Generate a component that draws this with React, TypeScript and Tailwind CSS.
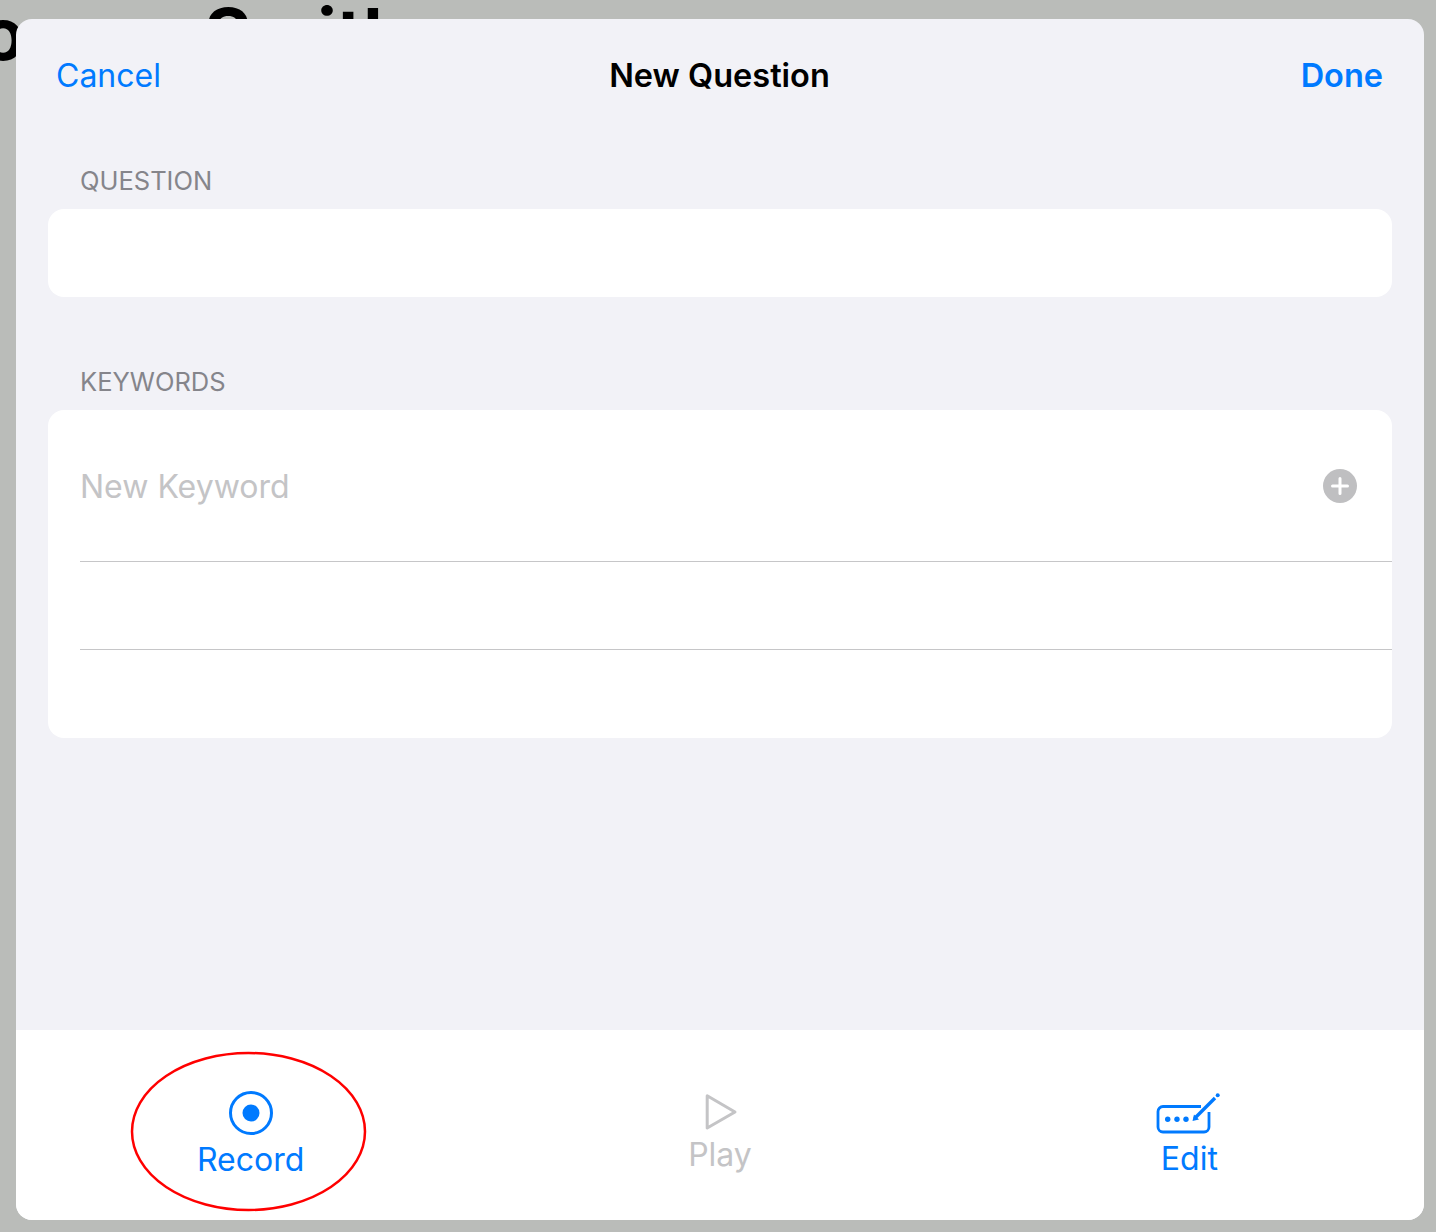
export default function App() {
  return (
    <div className="relative h-[1232px] w-[1436px] overflow-hidden bg-[#babcb9] pt-[19px] pl-4 font-['Inter',sans-serif]">
      {/* page behind the sheet */}
      <div className="absolute top-[-10px] left-[-61px] whitespace-nowrap text-[72px] leading-[88px] font-bold text-black [word-spacing:34px]">
        Jones Smith
      </div>

      <div className="relative flex h-[1201px] w-[1408px] flex-col overflow-hidden rounded-2xl bg-[#f2f2f7]">
        <header className="grid h-[112px] grid-cols-3 items-center pt-[2px] pr-[41px] pl-[40px] text-[32px]">
          <span className="text-[#007aff]">Cancel</span>
          <span className="text-center text-[32.5px] font-semibold text-black">New Question</span>
          <span className="text-right text-[32.5px] font-semibold text-[#007aff]">Done</span>
        </header>

        <div className="flex h-[78px] items-end px-16 pb-[14px]">
          <p className="text-[25.5px] leading-7 text-[#85858b]">QUESTION</p>
        </div>
        <div className="mx-8 h-[88px] rounded-2xl bg-white" />

        <div className="flex h-[113px] items-end px-16 pb-[14px]">
          <p className="text-[25.5px] leading-7 text-[#85858b]">KEYWORDS</p>
        </div>
        <div className="mx-8 h-[328px] overflow-hidden rounded-2xl bg-white pl-8">
          <div className="flex h-[152px] items-center justify-between border-b border-[#c6c6c8] pr-[35px]">
            <span className="pt-[2px] text-[32px] text-[#c4c4c6]">New Keyword</span>
            <PlusBadge />
          </div>
          <div className="h-[88px] border-b border-[#c6c6c8]" />
        </div>

        <div className="flex-1" />

        <footer className="grid h-[190px] grid-cols-3 bg-white text-[32px]">
          <div className="flex flex-col items-center pt-[61px] text-[#007aff]">
            <RecordIcon />
            <span className="mt-[5px] leading-10">Record</span>
          </div>
          <div className="flex flex-col items-center pt-[62px] text-[#c4c4c6]">
            <PlayIcon />
            <span className="mt-[3px] leading-10">Play</span>
          </div>
          <div className="flex flex-col items-center pt-[62px] text-[#007aff]">
            <EditIcon />
            <span className="mt-[3px] leading-10">Edit</span>
          </div>
        </footer>
      </div>

      {/* red annotation */}
      <svg className="absolute top-[1050px] left-[129px]" width="239" height="163" viewBox="0 0 239 163" fill="none">
        <ellipse cx="119.5" cy="81.5" rx="116.5" ry="78.5" stroke="#ff0000" strokeWidth="2.5" />
      </svg>
    </div>
  );
}

function PlusBadge() {
  return (
    <svg width="34" height="34" viewBox="0 0 34 34">
      <circle cx="17" cy="17" r="17" fill="#bfbfc1" />
      <path d="M17 9.5v15M9.5 17h15" stroke="#fff" strokeWidth="3" strokeLinecap="round" />
    </svg>
  );
}

function RecordIcon() {
  return (
    <svg width="44" height="44" viewBox="0 0 44 44" fill="none">
      <circle cx="22" cy="22" r="20.5" stroke="currentColor" strokeWidth="3" />
      <circle cx="22" cy="22" r="8.5" fill="currentColor" />
    </svg>
  );
}

function PlayIcon() {
  return (
    <svg className="ml-[3px]" width="36" height="40" viewBox="0 0 36 40" fill="none">
      <path d="M4.2 3.7 32 20 4.2 36Z" stroke="currentColor" strokeWidth="3" strokeLinejoin="round" />
    </svg>
  );
}

function EditIcon() {
  return (
    <svg width="66" height="44" viewBox="0 0 66 44" fill="none">
      <path
        d="M45 14.5H7a5 5 0 0 0-5 5V35a5 5 0 0 0 5 5h41a5 5 0 0 0 5-5V20"
        stroke="currentColor"
        strokeWidth="2.8"
      />
      <circle cx="11.7" cy="27.3" r="2.7" fill="currentColor" />
      <circle cx="21" cy="27.3" r="2.7" fill="currentColor" />
      <circle cx="30" cy="27.3" r="2.7" fill="currentColor" />
      <path d="M38.5 26.5 59 6" stroke="currentColor" strokeWidth="3.4" />
      <path d="M36.5 29 38 22.5 43 27.5Z" fill="currentColor" />
      <circle cx="61.7" cy="3.3" r="2" fill="currentColor" />
    </svg>
  );
}
